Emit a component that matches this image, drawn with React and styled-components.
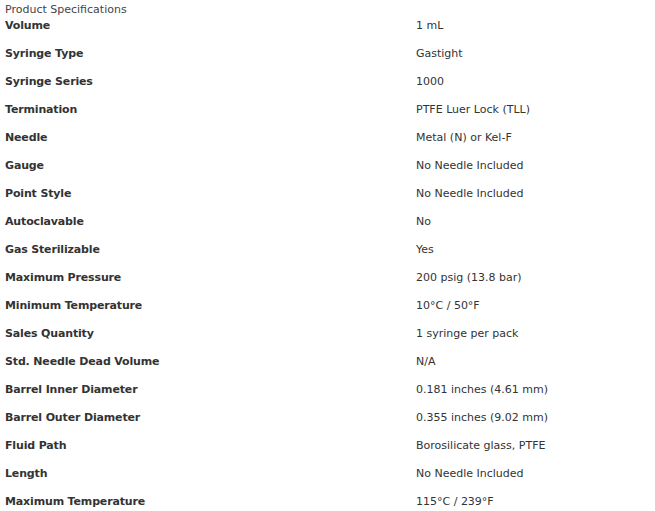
import React from 'react';
import styled, { createGlobalStyle } from 'styled-components';

const GlobalStyle = createGlobalStyle`
  body {
    margin: 0;
    background: #ffffff;
    font-family: "DejaVu Sans", Verdana, sans-serif;
  }
`;

const Wrapper = styled.div`
  padding: 2px 5px 0;
`;

const Heading = styled.div`
  font-size: 11px;
  line-height: 16px;
  color: #444444;
`;

const SpecTable = styled.div`
  display: grid;
  grid-template-columns: 411px 1fr;
`;

const Label = styled.div`
  font-size: 11px;
  font-weight: bold;
  letter-spacing: -0.15px;
  line-height: 16px;
  padding-bottom: 12px;
  color: #333333;
`;

const Value = styled.div`
  font-size: 11px;
  line-height: 16px;
  padding-bottom: 12px;
  color: #333333;
`;

const specs = [
  ['Volume', '1 mL'],
  ['Syringe Type', 'Gastight'],
  ['Syringe Series', '1000'],
  ['Termination', 'PTFE Luer Lock (TLL)'],
  ['Needle', 'Metal (N) or Kel-F'],
  ['Gauge', 'No Needle Included'],
  ['Point Style', 'No Needle Included'],
  ['Autoclavable', 'No'],
  ['Gas Sterilizable', 'Yes'],
  ['Maximum Pressure', '200 psig (13.8 bar)'],
  ['Minimum Temperature', '10°C / 50°F'],
  ['Sales Quantity', '1 syringe per pack'],
  ['Std. Needle Dead Volume', 'N/A'],
  ['Barrel Inner Diameter', '0.181 inches (4.61 mm)'],
  ['Barrel Outer Diameter', '0.355 inches (9.02 mm)'],
  ['Fluid Path', 'Borosilicate glass, PTFE'],
  ['Length', 'No Needle Included'],
  ['Maximum Temperature', '115°C / 239°F'],
];

const App = () => (
  <>
    <GlobalStyle />
    <Wrapper>
      <Heading>Product Specifications</Heading>
      <SpecTable>
        {specs.map(([label, value]) => (
          <React.Fragment key={label}>
            <Label>{label}</Label>
            <Value>{value}</Value>
          </React.Fragment>
        ))}
      </SpecTable>
    </Wrapper>
  </>
);

export default App;
